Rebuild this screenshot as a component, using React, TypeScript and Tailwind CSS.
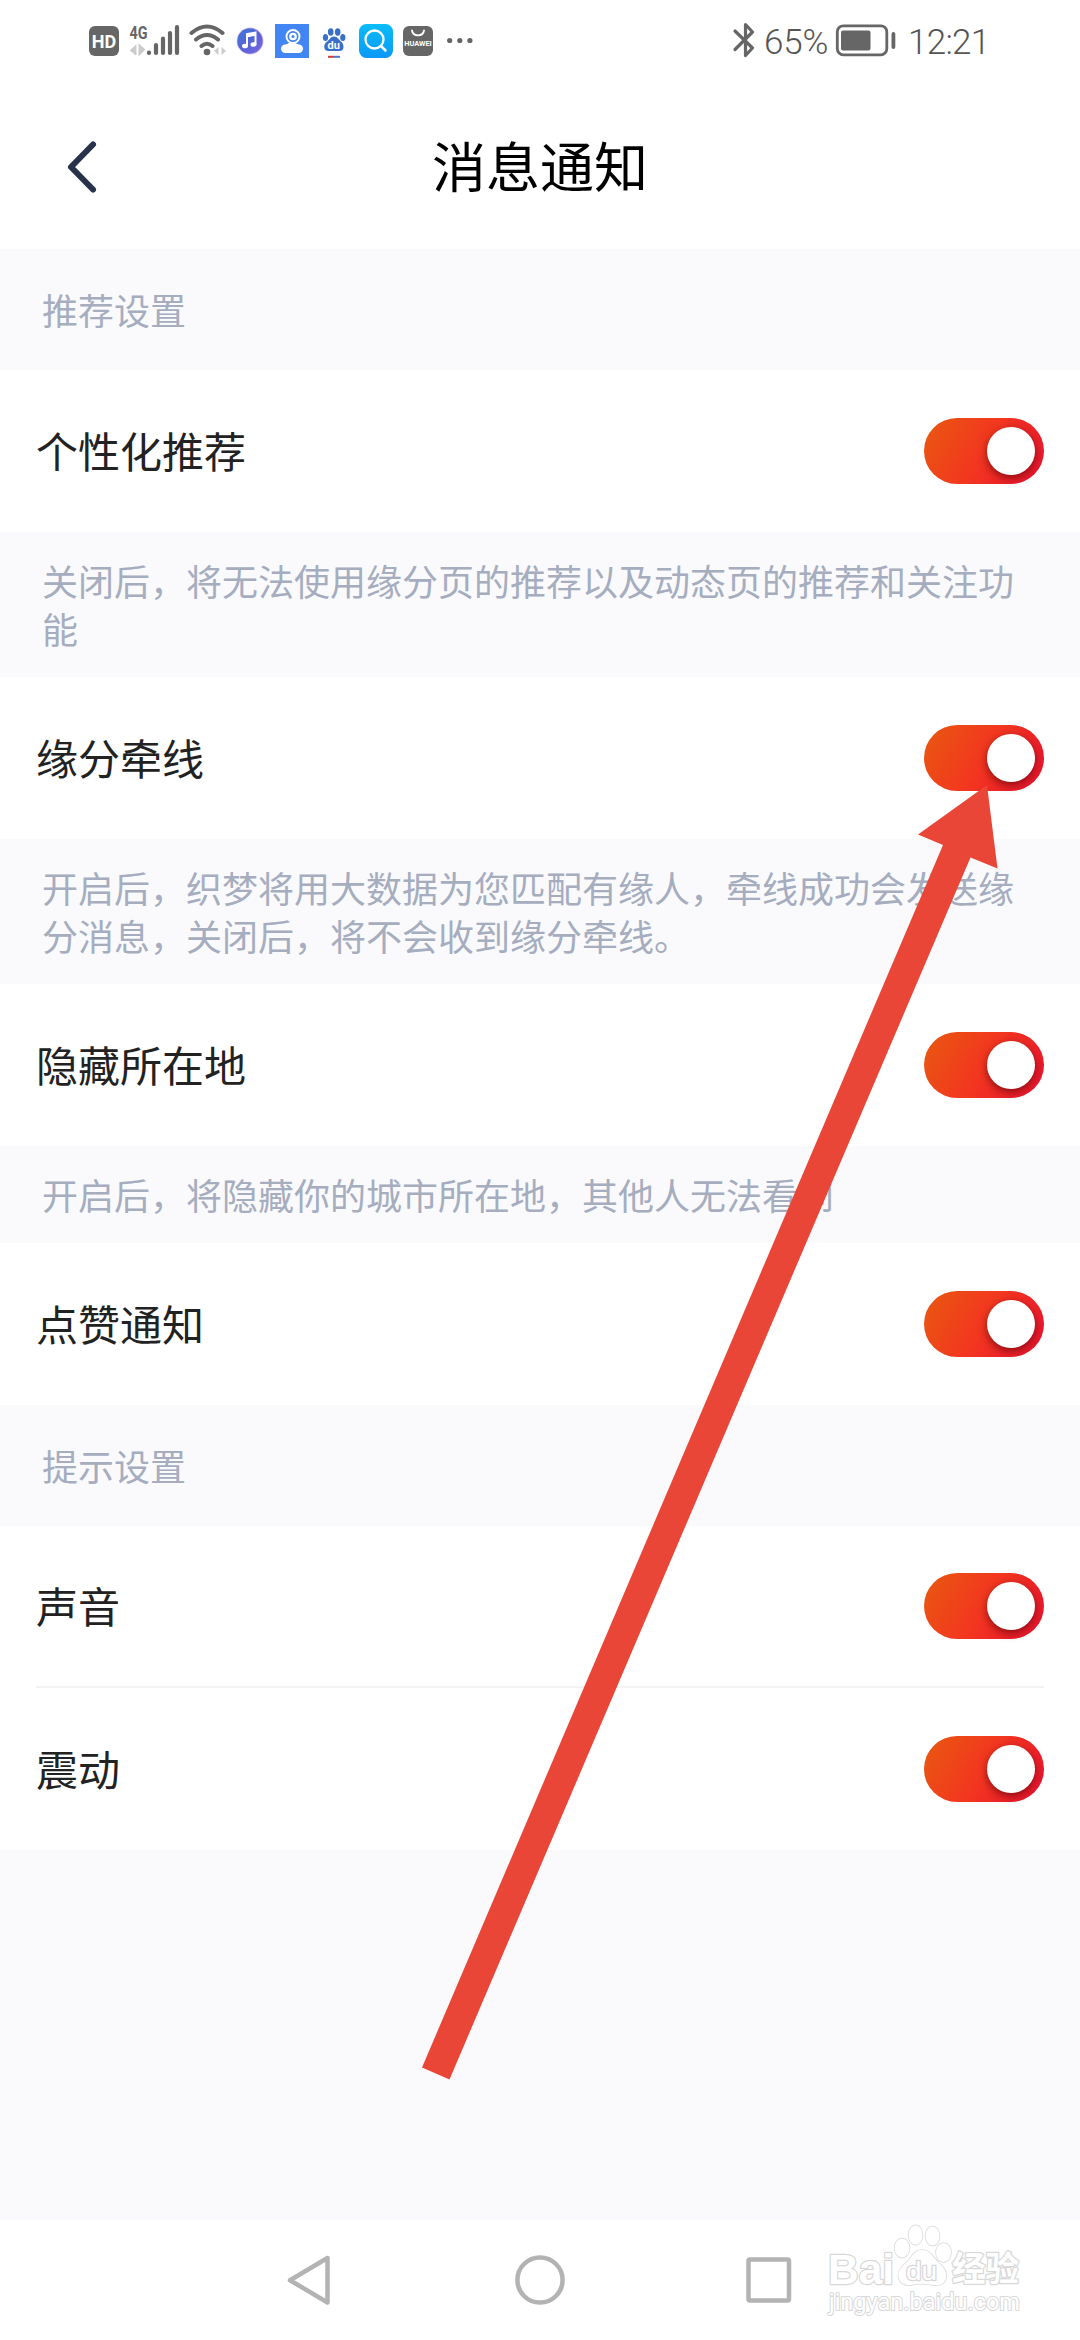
import { useState } from "react";

interface SettingRowProps {
  label: string;
  defaultOn?: boolean;
  divider?: boolean;
}

function Toggle({ on, onToggle }: { on: boolean; onToggle: () => void }) {
  return (
    <button
      role="switch"
      aria-checked={on}
      onClick={onToggle}
      className={
        on
          ? "flex h-[66px] w-[120px] items-center justify-end rounded-full bg-linear-[120deg] from-[#e8590f] via-[#f33620] to-[#e81030] px-[9px]"
          : "flex h-[66px] w-[120px] items-center justify-start rounded-full bg-gray-300 px-[9px]"
      }
    >
      <span className="size-12 rounded-full bg-white shadow-[0_3px_9px_rgba(70,0,0,0.6)]" />
    </button>
  );
}

function SettingRow({ label, defaultOn = true, divider }: SettingRowProps) {
  const [on, setOn] = useState(defaultOn);

  return (
    <div className="h-[162px] bg-white px-9">
      <div
        className={
          divider
            ? "flex h-full items-center justify-between border-b-2 border-[#f4f4f5]"
            : "flex h-full items-center justify-between"
        }
      >
        <span className="pb-0.5 text-[42px] leading-none text-[#222222]">{label}</span>
        <Toggle on={on} onToggle={() => setOn(!on)} />
      </div>
    </div>
  );
}

function SectionTitle({ children }: { children: string }) {
  return (
    <h2 className="flex h-[121px] items-center px-[42px] pb-0.5 text-4xl leading-[48px] text-[#a5adbf]">
      {children}
    </h2>
  );
}

function Note({ children }: { children: string }) {
  return (
    <p className="px-[42px] pt-6 pb-[25px] text-4xl leading-[48px] text-[#a5adbf]">
      {children}
    </p>
  );
}

function StatusBar() {
  return (
    <div className="flex h-[82px] items-center pl-[89px]">
      <span className="flex h-[30px] w-[30px] items-center justify-center rounded-md bg-[#666] font-[Roboto] text-[18px] font-bold text-white">
        HD
      </span>

      {/* mobile signal */}
      <svg className="ml-2.5" width="52" height="40" viewBox="129 21 52 40">
        <text x="129.5" y="38.5" fontSize="18" fontWeight="700" fontFamily="Roboto" fill="#666" textLength="18" lengthAdjust="spacingAndGlyphs">
          4G
        </text>
        <path d="M135.500 55v-8.500l-5 4.500M139.500 45.500v8.500l4.500-4.500z" fill="#ccc" stroke="#ccc" strokeWidth="2" />
        <g stroke="#666" strokeWidth="4.2" strokeLinecap="round">
          <path d="M149 52.6v.4M156 45v8M163 38.500v14.5M170 33v20M177 27v26" />
        </g>
      </svg>

      {/* wifi */}
      <svg className="ml-2" width="38" height="40" viewBox="189 21 38 40">
        <g fill="none" stroke="#666" strokeWidth="4" strokeLinecap="round">
          <path d="M191.500 33q15.500-13 31 0M196 39.500q11-9 22 0M201.500 46q5.500-4.500 11 0" />
        </g>
        <circle cx="207" cy="52" r="3.300" fill="#666" />
        <path d="M214 51l4.500-4v8zM226 51l-4.500-4v8z" fill="#ccc" />
      </svg>

      {/* music */}
      <svg className="ml-2" width="30" height="40" viewBox="235 21 30 40">
        <defs>
          <linearGradient id="music" x1="0" y1="0" x2="1" y2="1">
            <stop offset="0" stopColor="#3f7ad8" />
            <stop offset="0.5" stopColor="#5563d6" />
            <stop offset="1" stopColor="#7a68e0" />
          </linearGradient>
        </defs>
        <circle cx="250" cy="41" r="13.500" fill="#dcc4f5" />
        <circle cx="250" cy="41" r="12.700" fill="url(#music)" />
        <path d="M247 46v-12l8.500-1.500v12" fill="none" stroke="#fff" strokeWidth="2" />
        <path d="M247 36l8.500-1.500" stroke="#fff" strokeWidth="2.500" />
        <ellipse cx="245" cy="46" rx="3" ry="2.300" fill="#fff" />
        <ellipse cx="253.500" cy="44.500" rx="3" ry="2.300" fill="#fff" />
      </svg>

      {/* camera */}
      <svg className="ml-2.5" width="34" height="40" viewBox="275 21 34 40">
        <path d="M275 24h34v34h-34z" fill="#4285f4" />
        <rect x="281" y="44.500" width="22" height="8.500" rx="4.200" fill="#fff" />
        <path d="M286 45q6-4 12 0z" fill="#fff" stroke="#fff" />
        <circle cx="293" cy="36.500" r="6.500" fill="none" stroke="#fff" strokeWidth="2" />
        <circle cx="293" cy="36.500" r="2.700" fill="none" stroke="#fff" strokeWidth="2.300" />
      </svg>

      {/* baidu */}
      <svg className="ml-3" width="26" height="40" viewBox="321 21 26 40">
        <g fill="#3a6fc9">
          <ellipse cx="325.500" cy="37.500" rx="2.600" ry="3.500" />
          <ellipse cx="330.700" cy="32" rx="2.800" ry="3.700" />
          <ellipse cx="337.700" cy="32" rx="2.800" ry="3.700" />
          <ellipse cx="342.800" cy="37.500" rx="2.600" ry="3.500" />
          <path d="M334 36.500c3.500 0 5 3.500 7.500 5.500s3.500 9-2 9h-11c-5.500 0-5-7-2-9s4-5.500 7.500-5.500z" />
        </g>
        <text x="327.500" y="49" fontSize="11" fontWeight="700" fontFamily="Roboto" fill="#fff">
          du
        </text>
        <path d="M328 56.800h6" stroke="#d33a3a" strokeWidth="2" />
        <path d="M334 56.800h6" stroke="#4a78cc" strokeWidth="2" />
      </svg>

      {/* search */}
      <svg className="ml-3" width="34" height="40" viewBox="359 21 34 40">
        <defs>
          <linearGradient id="search" x1="0" y1="0" x2="0" y2="1">
            <stop offset="0" stopColor="#08bdf8" />
            <stop offset="1" stopColor="#0a98f8" />
          </linearGradient>
        </defs>
        <rect x="359" y="24" width="34" height="34" rx="7.500" fill="url(#search)" />
        <circle cx="374.500" cy="39.500" r="9" fill="none" stroke="#fff" strokeWidth="2.300" />
        <path d="M381 46l4.500 4.500" stroke="#fff" strokeWidth="2.500" strokeLinecap="round" />
      </svg>

      {/* app gallery */}
      <svg className="ml-2.5" width="30" height="40" viewBox="403 21 30 40">
        <rect x="403" y="26" width="30" height="30" rx="6" fill="#666" />
        <path d="M412 30.500c1 6.500 11 6.500 12 0" fill="none" stroke="#fff" strokeWidth="1.800" strokeLinecap="round" />
        <text x="404.200" y="46" fontSize="7" fontWeight="700" fontFamily="Roboto" fill="#fff" textLength="27.500" lengthAdjust="spacingAndGlyphs">
          HUAWEI
        </text>
      </svg>

      <svg className="ml-3.5" width="26" height="40" viewBox="447 21 26 40">
        <g fill="#666">
          <circle cx="449.700" cy="40.500" r="2.600" />
          <circle cx="459.800" cy="40.500" r="2.600" />
          <circle cx="469.900" cy="40.500" r="2.600" />
        </g>
      </svg>

      {/* bluetooth */}
      <svg className="ml-[259px]" width="24" height="40" viewBox="732 21 24 40">
        <path
          d="M735 31l17.500 17-7 7.500v-31l7 7.500-17.500 17.500"
          fill="none"
          stroke="#666"
          strokeWidth="3.200"
          strokeLinecap="round"
          strokeLinejoin="round"
        />
      </svg>
      <span className="ml-2 w-[71px] pt-1 font-[Roboto] text-[35px] leading-10 font-light tracking-[-0.2px] whitespace-nowrap text-[#555]">
        65%
      </span>

      {/* battery */}
      <svg width="62" height="40" viewBox="834 21 62 40">
        <rect x="836.300" y="25.800" width="49.500" height="29" rx="6" fill="none" stroke="#666" strokeWidth="2.800" />
        <rect x="840" y="30.500" width="29.500" height="20" rx="2" fill="#666" />
        <rect x="890.500" y="32" width="3.800" height="17" rx="1.900" fill="#666" />
      </svg>
      <span className="ml-[11px] pt-1 font-[Roboto] text-[35px] leading-10 font-light tracking-[-0.7px] text-[#555]">
        12:21
      </span>
    </div>
  );
}

function Header() {
  return (
    <header className="grid h-[167px] grid-cols-3 items-center px-16 pt-0.5">
      <svg width="36" height="60" viewBox="64 137 36 60">
        <path
          d="M93 144.500L71 167l22 22.500"
          fill="none"
          stroke="#28324a"
          strokeWidth="6"
          strokeLinecap="round"
          strokeLinejoin="round"
        />
      </svg>
      <h1 className="pb-1 text-center text-[54px] leading-none text-black">消息通知</h1>
    </header>
  );
}

function NavBar() {
  return (
    <nav className="flex h-[120px] items-center bg-white pl-[284px]">
      <svg width="50" height="56" viewBox="284 2252 50 56">
        <path d="M327.500 2258v44.500l-37.500-22.300z" fill="none" stroke="#b3b3b3" strokeWidth="4.500" strokeLinejoin="round" />
      </svg>
      <svg className="ml-[178px]" width="56" height="56" viewBox="512 2252 56 56">
        <circle cx="540" cy="2280" r="22.600" fill="none" stroke="#b3b3b3" strokeWidth="4.500" />
      </svg>
      <svg className="ml-[173px]" width="56" height="56" viewBox="741 2252 56 56">
        <rect x="748.500" y="2259.500" width="40.500" height="41" rx="1.500" fill="none" stroke="#b3b3b3" strokeWidth="4.500" />
      </svg>
    </nav>
  );
}

function Watermark() {
  return (
    <svg
      className="pointer-events-none absolute right-[50px] bottom-[18px]"
      width="210"
      height="106"
      viewBox="820 2216 210 106"
    >
      <g fill="#fff" stroke="#d8d8d8" strokeWidth="1.500" strokeLinejoin="round" paintOrder="stroke">
        <ellipse cx="902" cy="2248" rx="7.500" ry="9.500" />
        <ellipse cx="915.500" cy="2235" rx="7" ry="9.800" />
        <ellipse cx="932.500" cy="2236" rx="7" ry="9.500" />
        <ellipse cx="943.500" cy="2252.500" rx="7.500" ry="9.500" />
        <path d="M922 2250c9 0 11 8 17 13s8 10 7 15c-2 8-9 8-16 6.500-6-1-10-1-16 0-7 1.500-14 0-15.500-7-1-6 2-10 7.500-14.500s7-13 16-13z" />
        <g strokeWidth="2.500">
          <text x="828" y="2283.500" fontSize="43" fontWeight="700" fontFamily="Liberation Sans" textLength="66" lengthAdjust="spacingAndGlyphs">
            Bai
          </text>
          <text x="906" y="2280" fontSize="26" fontFamily="Liberation Sans" textLength="31" lengthAdjust="spacingAndGlyphs">
            du
          </text>
          <text x="952" y="2281" fontSize="34" fontWeight="700" fontFamily="Noto Sans CJK SC" textLength="67" lengthAdjust="spacingAndGlyphs">
            经验
          </text>
          <text x="829" y="2310" fontSize="23" fontFamily="Roboto" strokeWidth="2" textLength="191" lengthAdjust="spacingAndGlyphs">
            jingyan.baidu.com
          </text>
        </g>
      </g>
    </svg>
  );
}

export default function App() {
  return (
    <div className="relative flex h-[2340px] w-[1080px] flex-col overflow-hidden bg-white font-['Noto_Sans_CJK_SC',sans-serif]">
      <StatusBar />
      <Header />

      <main className="flex-1 bg-[#fafafc]">
        <SectionTitle>推荐设置</SectionTitle>
        <SettingRow label="个性化推荐" />
        <Note>关闭后，将无法使用缘分页的推荐以及动态页的推荐和关注功能</Note>
        <SettingRow label="缘分牵线" />
        <Note>开启后，织梦将用大数据为您匹配有缘人，牵线成功会发送缘分消息，关闭后，将不会收到缘分牵线。</Note>
        <SettingRow label="隐藏所在地" />
        <Note>开启后，将隐藏你的城市所在地，其他人无法看到</Note>
        <SettingRow label="点赞通知" />

        <SectionTitle>提示设置</SectionTitle>
        <SettingRow label="声音" divider />
        <SettingRow label="震动" />
      </main>

      <NavBar />
      <Watermark />

      {/* pointer to the second switch */}
      <svg
        className="pointer-events-none absolute top-[780px] left-[415px]"
        width="590"
        height="1305"
        viewBox="415 780 590 1305"
      >
        <path d="M987 785L918 834.500 943 845 422 2067.500 449.500 2079.500 970.500 857.500 997.500 868.500z" fill="#ea4638" />
      </svg>
    </div>
  );
}
